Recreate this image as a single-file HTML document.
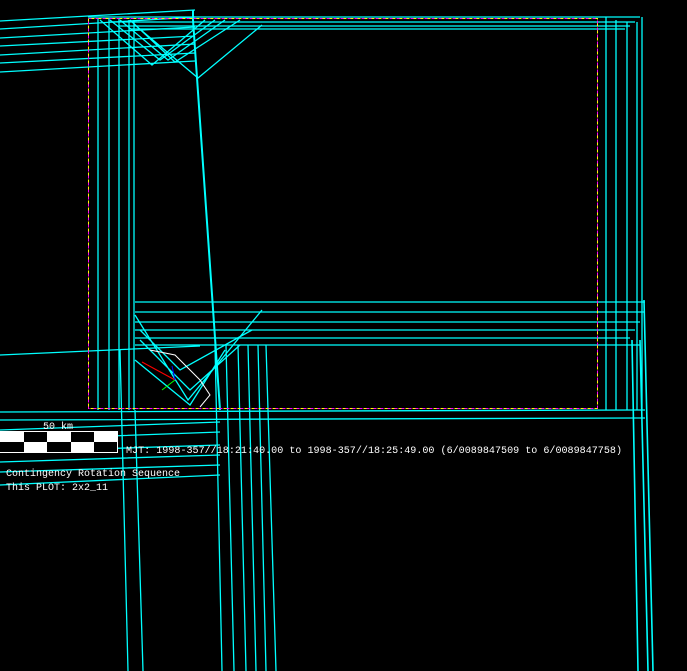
<!DOCTYPE html>
<html><head><style>
html,body{margin:0;padding:0;background:#000;width:687px;height:671px;overflow:hidden}
svg{position:absolute;left:0;top:0}
text{font-family:"Liberation Mono","DejaVu Sans Mono",monospace;font-size:10px;fill:#fff}
</style></head><body>
<svg width="687" height="671" viewBox="0 0 687 671">
<g stroke="#0ff" stroke-width="1.3" fill="none">
<path d="M0 21 L195 10 M0 29 L195 17 M0 38 L195 27 M0 46 L195 36 M0 55 L195 44 M0 63 L195 53 M0 72 L195 61"/>
<path d="M98 18 V410 M109 18 V410 M119 18 V410 M129 20 V410 M134 20 V410"/>
<path d="M88 17 H640 M109 22 H635 M119 26 H630 M129 29 H625"/>
<path d="M193 10 V20 L220 410" stroke-width="2"/>
<path d="M606 17 V410 M616 20 V410 M627 22 V410 M637 22 V410 M642 17 V410"/>
<path d="M100 20 L152 65 L205 20 M110 20 L160 60 L215 20 M120 20 L168 60 L225 20 M130 20 L175 62 L240 20 M135 25 L198 78 L262 25"/>
<path d="M135 312 H645 M135 322 H640 M135 330 H635 M135 338 H630 M135 345 H640 M0 355 L200 346"/>
<path d="M135 302 H645"/>
<path d="M135 315 L188 400 L262 310 M140 330 L180 370 L252 330 M140 340 L190 390 L240 345 M135 360 L190 405 L225 350"/>
<path d="M215 345 L222 671 M226 345 L234 671 M238 345 L246 671 M248 345 L256 671 M258 345 L266 671 M266 345 L276 671"/>
<path d="M120 350 L128 671 M135 410 L143 671"/>
<path d="M632 340 L638 671 M640 340 L648 671 M644 300 L653 671" stroke-width="1.6"/>
<path d="M0 412 L645 410 M0 420 L645 418"/>
<path d="M0 430 L220 422 M0 440 L220 432 M0 452 L220 445 M0 462 L220 455 M0 472 L220 465 M0 485 L220 475"/>
</g>
<g stroke="#fff" stroke-width="1" fill="none">
<path d="M150 350 L175 355 L200 380 L210 395 L200 407"/>
</g>
<rect x="88.5" y="18.5" width="509" height="390" fill="none" stroke="#f0f" stroke-dasharray="4 3"/>
<rect x="88.5" y="18.5" width="509" height="390" fill="none" stroke="#ff0" stroke-dasharray="3 4" stroke-dashoffset="4"/>
<path d="M142 362 L175 380" stroke="#f00"/>
<path d="M162 390 L175 380" stroke="#0f0"/>
<path d="M172 366 L175 380" stroke="#00f"/>
<rect x="0" y="431" width="118" height="22" fill="#fff"/>
<g fill="#000">
<rect x="24" y="432" width="23" height="10"/><rect x="71" y="432" width="23" height="10"/>
<rect x="0" y="442" width="24" height="10"/><rect x="47" y="442" width="24" height="10"/><rect x="94" y="442" width="23" height="10"/>
</g>
<text x="43" y="429" textLength="30" lengthAdjust="spacingAndGlyphs">50 km</text>
<text x="126" y="453" textLength="496" lengthAdjust="spacingAndGlyphs">MJT:  1998-357//18:21:40.00 to 1998-357//18:25:49.00 (6/0089847509 to 6/0089847758)</text>
<text x="6" y="476" textLength="174" lengthAdjust="spacingAndGlyphs">Contingency Rotation Sequence</text>
<text x="6" y="490" textLength="102" lengthAdjust="spacingAndGlyphs">This PLOT: 2x2_11</text>
</svg>
</body></html>
